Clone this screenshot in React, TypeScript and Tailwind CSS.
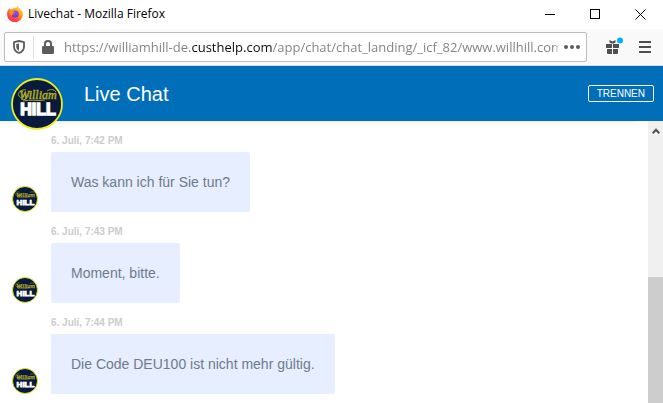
import { ReactNode } from "react";

const messages = [
  { time: "6. Juli, 7:42 PM", text: "Was kann ich für Sie tun?" },
  { time: "6. Juli, 7:43 PM", text: "Moment, bitte." },
  { time: "6. Juli, 7:44 PM", text: "Die Code DEU100 ist nicht mehr gültig." },
];

function FirefoxIcon() {
  return (
    <svg viewBox="0 0 16 16" className="size-4 shrink-0" aria-hidden="true">
      <defs>
        <linearGradient id="fox" x1="0.8" y1="0" x2="0.2" y2="1">
          <stop offset="0" stopColor="#ffe03a" />
          <stop offset="0.4" stopColor="#ff9a1f" />
          <stop offset="0.7" stopColor="#ff4a3d" />
          <stop offset="1" stopColor="#f0257c" />
        </linearGradient>
        <radialGradient id="globe" cx="0.6" cy="0.3" r="0.8">
          <stop offset="0" stopColor="#a046f0" />
          <stop offset="1" stopColor="#5a3bd0" />
        </radialGradient>
      </defs>
      <path
        d="M1.6 3.2c.3-.7.7-1.1 1-1.3 0 .7.3 1.3.6 1.7.6-.3 1.2-.4 1.8-.3L6 2.5c1.3-1 2.5-1 3.5-.5C9.4 1.2 9.7.5 10.3 0c.5 1.2 2 2 3 3.1.5.5.8 1.1 1 1.6.1-.3.1-.6 0-.9 1 1.2 1.6 2.8 1.6 4.4A7.9 7.9 0 0 1 .1 8.5C0 6.5.5 4.6 1.6 3.2z"
        fill="url(#fox)"
      />
      <circle cx="8.2" cy="8" r="3.6" fill="url(#globe)" />
      <path d="M2.2 5.8C3.5 4.4 5.2 4.6 6.3 5.4c.7.2 1.5.1 2 .3-.1.7-1 1.1-1.7 1.4-.4.3-.4.9-.1 1.3-1 .1-1.9.9-2 1.9-1-1.2-2.3-2.7-2.3-4.5z" fill="#ff8a22" />
    </svg>
  );
}

function ShieldIcon() {
  return (
    <svg viewBox="0 0 12 14" className="h-3.5 w-3 shrink-0" aria-hidden="true">
      <path d="M6 1 L11 2.2 V6.5 C11 9.6 9 12 6 13 C3 12 1 9.6 1 6.5 V2.2 Z" fill="none" stroke="#5b5b5b" strokeWidth="1.8" strokeLinejoin="round" />
      <path d="M6 3.4 L3.3 4.1 V6.7 C3.3 8.5 4.3 9.9 6 10.7 Z" fill="#5b5b5b" />
    </svg>
  );
}

function LockIcon() {
  return (
    <svg viewBox="0 0 12 14" className="h-3.5 w-3 shrink-0" aria-hidden="true">
      <path d="M3 7V4a3 3 0 0 1 6 0v3" fill="none" stroke="#5b5b5b" strokeWidth="2" />
      <rect x="0" y="6" width="12" height="8" rx="1.2" fill="#5b5b5b" />
    </svg>
  );
}

function GiftIcon() {
  return (
    <svg viewBox="0 0 20 20" className="size-5" aria-hidden="true">
      <path d="M3 7h6v4H3zM10 7h6v4h-6zM4 12h5v5H5a1 1 0 0 1-1-1zM10 12h5v4a1 1 0 0 1-1 1h-4z" fill="#4f4f52" />
      <path d="M6.5 3l3 1.500 3-1.500v2.500L10.500 6.500h-2l-2-1z" fill="#4f4f52" />
      <circle cx="17" cy="3.5" r="3" fill="#00b3f4" />
    </svg>
  );
}

function Logo({ className }: { className: string }) {
  return (
    <svg viewBox="0 0 52 52" className={className} role="img" aria-label="William Hill">
      <circle cx="26" cy="26" r="25" fill="#0a1a3c" stroke="#e9ef1c" strokeWidth="1.8" />
      <text x="27" y="21" textAnchor="middle" fontSize="12" fontStyle="italic" fill="#b3ae25" stroke="#b3ae25" strokeWidth="0.5" fontFamily="'Liberation Serif', serif">
        William
      </text>
      <path
        d="M15 12c-5-1-9 3-7 6 1 2 4 2 5 0M10 21c4 2 7-1 8-4M36 13c3-2 7-2 9 1M12 23c7-2 14 .5 22-1"
        fill="none"
        stroke="#b3ae25"
        strokeWidth="0.9"
      />
      <text x="27" y="37" textAnchor="middle" fontSize="16" fontWeight="700" fill="#fff" stroke="#fff" strokeWidth="1.5" fontFamily="'Liberation Sans', Arial, sans-serif">
        HILL
      </text>
    </svg>
  );
}

function WindowButton({ label, children }: { label: string; children: ReactNode }) {
  return (
    <button aria-label={label} className="flex h-7 w-[45px] items-center justify-center">
      <svg viewBox="0 0 11 11" className="size-[11px]" fill="none" stroke="#000" shapeRendering="crispEdges" aria-hidden="true">
        {children}
      </svg>
    </button>
  );
}

function TitleBar() {
  return (
    <div className="flex h-[29px] shrink-0 items-start bg-white pl-[7px] font-['Open_Sans',sans-serif]">
      <div className="flex h-7 flex-1 items-center gap-[5px]">
        <FirefoxIcon />
        <span className="text-[12px] leading-4 text-black">Livechat - Mozilla Firefox</span>
      </div>
      <div className="flex">
        <WindowButton label="Minimieren">
          <path d="M0 5.5h10" />
        </WindowButton>
        <WindowButton label="Maximieren">
          <path d="M.5.5h9v9h-9z" />
        </WindowButton>
        <WindowButton label="Schließen">
          <path d="M.5.5l10 10M10.5.5l-10 10" shapeRendering="auto" />
        </WindowButton>
      </div>
    </div>
  );
}

function AddressBar() {
  return (
    <div className="flex h-[37px] shrink-0 items-center border-b border-[#dcdcdc] bg-[#f9f9fa] pr-1 pl-1">
      <div className="flex h-[30px] min-w-0 flex-1 items-center rounded-xs border border-[#bdbdbd] bg-white pr-1.5 pl-2">
        <ShieldIcon />
        <span className="mr-2 ml-2 h-[22px] w-px bg-[#dedede]" />
        <LockIcon />
        {/* the gradient darkens the domain part and fades out the end of the url */}
        <input
          aria-label="Adresse"
          readOnly
          defaultValue="https://williamhill-de.custhelp.com/app/chat/chat_landing/_icf_82/www.willhill.com"
          className="ml-2.5 h-6 min-w-0 flex-1 bg-[linear-gradient(to_right,#808080_127px,#0c0c0d_127px,#0c0c0d_208px,#808080_208px,#808080_calc(100%-6px),transparent)] bg-clip-text font-['Open_Sans',sans-serif] text-[13px] leading-5 text-transparent outline-none"
        />
        <button aria-label="Seitenaktionen" className="ml-1 shrink-0">
          <svg viewBox="0 0 16 4" className="h-1 w-4" fill="#5b5b5b" aria-hidden="true">
            <circle cx="2" cy="2" r="2" />
            <circle cx="8" cy="2" r="2" />
            <circle cx="14" cy="2" r="2" />
          </svg>
        </button>
      </div>
      <button aria-label="Neuigkeiten" className="ml-4">
        <GiftIcon />
      </button>
      <button aria-label="Menü" className="mr-2 ml-4">
        <svg viewBox="0 0 12 12" className="size-3" stroke="#4f4f52" strokeWidth="2" aria-hidden="true">
          <path d="M0 1h12M0 6h12M0 11h12" />
        </svg>
      </button>
    </div>
  );
}

function ChatHeader() {
  return (
    <header className="relative z-10 flex h-[55px] shrink-0 items-center bg-[#006eb9] pr-[9px] pl-[84px]">
      <Logo className="absolute top-3 left-[11px] size-[52px]" />
      <h1 className="flex-1 text-[20px] leading-6 text-white">Live Chat</h1>
      <button className="h-[17px] rounded-xs border border-white px-2 text-[10px] leading-3 text-white">TRENNEN</button>
    </header>
  );
}

function Message({ time, text }: { time: string; text: string }) {
  return (
    <li className="flex items-end gap-[13px]">
      <Logo className="size-[26px] shrink-0" />
      <div>
        <time className="mb-1 block text-[10px] leading-[15px] font-bold text-[#cccccc]">{time}</time>
        <p className="rounded-xs bg-[#e6eeff] p-5 text-[14px] leading-5 text-[#6f7b8c]">{text}</p>
      </div>
    </li>
  );
}

export default function App() {
  return (
    <div className="flex h-screen flex-col overflow-hidden bg-white font-['Liberation_Sans',Arial,sans-serif]">
      <TitleBar />
      <AddressBar />
      <ChatHeader />
      <main className="flex min-h-0 flex-1">
        <div className="min-w-0 flex-1 overflow-hidden">
          <div className="mr-3 h-px bg-[#f0f0f0] shadow-sm" />
          <ul className="flex flex-col gap-3 pt-[11px] pl-3">
            {messages.map((m) => (
              <Message key={m.time} {...m} />
            ))}
          </ul>
        </div>
        <div className="flex w-[15px] flex-col bg-[#f0f0f0]">
          <div className="flex h-[156px] shrink-0 justify-center pt-[7px]">
            <svg viewBox="0 0 8 6" className="h-1.5 w-2" fill="none" stroke="#505050" strokeWidth="2" aria-hidden="true">
              <path d="M.7 5.2L4 1.8l3.3 3.4" />
            </svg>
          </div>
          <div className="flex-1 bg-[#cdcdcd]" />
        </div>
      </main>
    </div>
  );
}
